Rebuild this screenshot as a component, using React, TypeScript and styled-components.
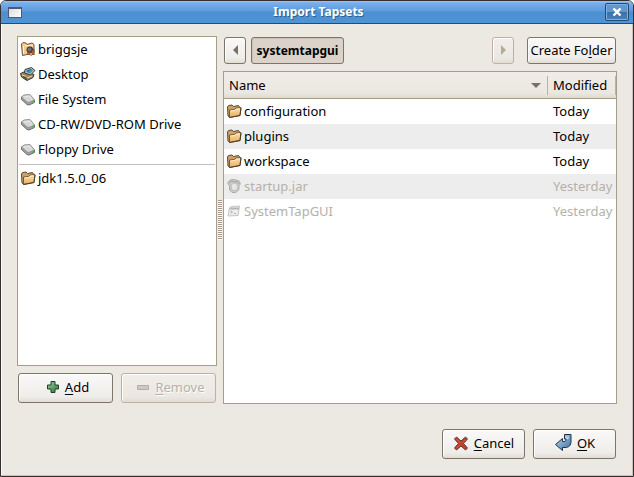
import React from "react";
import styled, { createGlobalStyle, css } from "styled-components";

const Global = createGlobalStyle`
  *, *::before, *::after { box-sizing: border-box; }
  body { margin: 0; background: #fff; }
  body, button, table { font: 13px/18px "Noto Sans", "Open Sans", sans-serif; color: #000; }
  button { margin: 0; }
`;

const Dialog = styled.div`
  min-height: 100vh;
  display: flex;
  flex-direction: column;
  border: 1px solid #35302f;
  border-radius: 6px 6px 0 0;
  background: #ece9e3;
  box-shadow: inset -1px -1px 0 #c9c1b6, inset 1px 0 0 #faf9f7;
  overflow: hidden;
`;

const TitleBar = styled.header`
  height: 23px;
  flex: none;
  display: grid;
  grid-template-columns: 24px 1fr 24px;
  align-items: center;
  padding: 0 4px 0 7px;
  background: linear-gradient(#9cc6f4 0, #78aeea 2px, #5f9bdb 10px, #4b90d1 11px, #4e94d6 100%);
  border-bottom: 1px solid #2c4a68;
`;

const Title = styled.h1`
  margin: 0;
  font-size: 12px;
  line-height: 20px;
  font-weight: 700;
  text-align: center;
  color: #fff;
  text-shadow: 1px 1px 0 #2f5f92;
`;

const WindowGlyph = styled.span`
  width: 14px;
  height: 11px;
  border: 1px solid #4b5c70;
  border-top-width: 2px;
  background: linear-gradient(135deg, #dcdcdc, #fff);
`;

const CloseButton = styled.button`
  width: 24px;
  height: 18px;
  padding: 0;
  display: grid;
  place-items: center;
  border: 1px solid #234a73;
  border-radius: 2px;
  background: linear-gradient(#6297cc 0 50%, #3a71a9 50%, #4780b8);
  box-shadow: inset 0 0 0 1px #80b0e0;
`;

const Body = styled.main`
  flex: 1;
  display: flex;
  padding: 12px 16px 0;
`;

const Sidebar = styled.aside`
  width: 200px;
  flex: none;
  display: flex;
  flex-direction: column;
`;

const frame = css`
  flex: 1;
  border: 1px solid #a89d8b;
  background: #fff;
`;

const Places = styled.ul`
  ${frame}
  margin: 0;
  padding: 0;
  list-style: none;
`;

const Place = styled.li`
  height: 25px;
  display: flex;
  align-items: center;
  gap: 2px;
  padding: 0 0 2px 2px;
  white-space: nowrap;
`;

const Separator = styled.li`
  height: 1px;
  margin: 2px 1px 1px;
  background: #c4c2be;
`;

const SidebarActions = styled.div`
  display: grid;
  grid-template-columns: 1fr 1fr;
  gap: 8px;
  padding: 7px 1px 1px;
`;

const Button = styled.button<{ $width?: number; $compact?: boolean }>`
  height: ${(p) => (p.$compact ? 27 : 30)}px;
  width: ${(p) => (p.$width ? p.$width + "px" : "auto")};
  padding: 0 0 2px;
  display: flex;
  align-items: center;
  justify-content: center;
  gap: 5px;
  border: 1px solid #7d7568;
  border-radius: 3px;
  background: linear-gradient(#faf9f8, #efedea 80%, #e2dcd4);
  box-shadow: inset 1px 1px 0 #fff;
  white-space: nowrap;
  &:disabled {
    color: #b5b1a9;
    border-color: #bdb1a4;
    background: linear-gradient(#f1eeea, #ebe7e2 80%, #e2dcd4);
    text-shadow: 1px 1px 0 #fff;
  }
`;

const SidebarButton = styled(Button)`
  padding-left: 4px;
`;

const PathButton = styled(Button)`
  padding: 0;
  font-size: 12px;
  font-weight: 700;
  background: #dbd2c9;
  box-shadow: inset 1px 1px 0 #cbc1b6;
`;

const Mnemonic = styled.span`
  text-decoration: underline;
  text-decoration-thickness: 1px;
  text-underline-offset: 2px;
`;

const Splitter = styled.div`
  width: 6px;
  flex: none;
  display: flex;
  align-items: center;
  justify-content: center;
`;

const Grip = styled.span`
  width: 4px;
  height: 40px;
  background: repeating-linear-gradient(#a1968a 0 1px, #fff 1px 2px);
`;

const Browser = styled.section`
  flex: 1;
  min-width: 0;
  display: flex;
  flex-direction: column;
`;

const PathBar = styled.nav`
  display: flex;
  gap: 5px;
  padding: 1px 1px 7px;
`;

const Spacer = styled.span`
  flex: 1;
`;

const FolderAction = styled.div`
  margin-left: 8px;
`;

const FileFrame = styled.div`
  ${frame}
`;

const FileTable = styled.table`
  width: 100%;
  table-layout: fixed;
  border-collapse: separate;
  border-spacing: 0;
`;

const HeadCell = styled.th<{ $width?: number }>`
  width: ${(p) => (p.$width ? p.$width + "px" : "auto")};
  height: 27px;
  padding: 0;
  background: linear-gradient(#f0ede8, #ebe8e2 80%, #dfd9d0);
  border-bottom: 1px solid #a89d8b;
`;

const SortButton = styled.button`
  width: 100%;
  height: 19px;
  display: flex;
  align-items: center;
  justify-content: space-between;
  padding: 0 6px 0 5px;
  border: 0;
  border-right: 1px solid #bab2a7;
  background: none;
`;

const FileRow = styled.tr<{ $disabled?: boolean }>`
  color: ${(p) => (p.$disabled ? "#b5b1a9" : "#000")};
  &:nth-child(even) { background: #ededed; }
`;

const Cell = styled.td`
  height: 25px;
  padding: 0 0 2px 5px;
  white-space: nowrap;
`;

const NameCell = styled(Cell)`
  padding-left: 2px;
`;

const FileName = styled.span`
  display: flex;
  align-items: center;
  gap: 2px;
`;

const Footer = styled.footer`
  display: flex;
  justify-content: flex-end;
  gap: 8px;
  padding: 25px 17px 17px;
`;

const Icon = styled.svg`
  flex: none;
  display: block;
`;

const FolderIcon = () => (
  <Icon width="16" height="16" viewBox="0 0 16 16" aria-hidden="true">
    <defs>
      <linearGradient id="folder" x2="0" y2="1">
        <stop stopColor="#ffdfa8" />
        <stop offset="1" stopColor="#e5ae66" />
      </linearGradient>
    </defs>
    <path d="M1.500 4 2.500 2.500 6 2 7.500 3.500 12.500 2.500 13.500 4V6L4 14.500 2 13z" fill="#cfa064" stroke="#54483a" />
    <path d="M3.500 14.500V7L8.500 6.500 10 5 15 4.500 14 12.500z" fill="url(#folder)" stroke="#755a38" />
    <path d="M15 5 14 12.500 3.500 14.500" fill="none" stroke="#4e3d28" />
    <path d="M4.500 8 9 7.500 10.500 6H14" fill="none" stroke="#ffedc9" />
  </Icon>
);

const HomeIcon = () => (
  <Icon width="16" height="16" viewBox="0 0 16 16" aria-hidden="true">
    <path d="M1.500 3 3 1.500 6 2 7 3.500 12 2 14 3.500V12L2.500 14.500z" fill="#efcb92" stroke="#6a5335" />
    <path d="M3.500 5v8M5 4.500h8" fill="none" stroke="#fff0cf" />
    <path d="m6.500 9 1.500-3 3.500-.500 3 3.500v5H8z" fill="#544a43" />
    <circle cx="9.500" cy="8.500" r="2.500" fill="#77716d" stroke="#423a35" />
    <path d="M7 12.500h3M13 9.500v4" stroke="#c4581f" strokeWidth="2" />
    <path d="M10 12h2v3h-2z" fill="#c9a27b" />
  </Icon>
);

const DesktopIcon = () => (
  <Icon width="16" height="16" viewBox="0 0 16 16" aria-hidden="true">
    <path d="M.500 7.500 5 5.500l9 3-1 3-6 3L1.500 11z" fill="#a18b59" stroke="#37342f" />
    <path d="M5 3.500 11.500 1.500 15 4.500 10.500 9 4.500 7z" fill="#b9c3c8" stroke="#30363c" />
    <path d="M6.500 4.200 11 2.800 13 4.600 10 7.200 6.500 6z" fill="#3275b5" />
    <path d="m9 5 3-1 .8.700L10 7z" fill="#60a850" />
    <path d="m2 9 4 1.500M7 12l5-2" stroke="#e4d5a8" />
    <path d="m3 10.500 3 1.500v2" fill="none" stroke="#3a342b" />
  </Icon>
);

const DriveIcon = () => (
  <Icon width="16" height="16" viewBox="0 0 16 16" aria-hidden="true">
    <path d="M1.500 6v2.500l5.500 5 2 .500 5.500-2.500V9z" fill="#a0a0a0" stroke="#6f6f6f" />
    <path d="M1.500 6 4 4l6-.500 4.500 5.500L9 11.500 7 11z" fill="#d6d6d6" stroke="#929292" />
    <path d="M4 6 9 5l3 3.500" fill="none" stroke="#eaeaea" />
    <path d="M12 11h2" stroke="#4fb84f" strokeWidth="1.500" />
  </Icon>
);

const JarIcon = () => (
  <Icon width="16" height="16" viewBox="0 0 16 16" aria-hidden="true">
    <path d="M1.500 5 4 2l3-.500L10 2l3 1 1.500 3-1.500 1.500v4L10 14.500H6L3.500 12V8z" fill="#cbcbc9" stroke="#afafad" />
    <path d="M5 7 7.500 5l3 .500 1.500 3-1.500 4h-4L5 9z" fill="#e6e6e4" stroke="#bcbcba" />
    <path d="M3 5 6 3l2 1 3-.500L13 6" fill="none" stroke="#a3a3a1" />
  </Icon>
);

const ProgramIcon = () => (
  <Icon width="16" height="16" viewBox="0 0 16 16" aria-hidden="true">
    <path d="M3.500 5 5 3.500 13.500 3 12 12.500 2 13z" fill="#eeeeec" stroke="#c4c4c2" />
    <path d="M4 5.500h9" stroke="#b5b5b3" strokeWidth="2" />
    <path d="m4.500 8 2 1-2 1.500M8 10.500h2" fill="none" stroke="#b0b0ae" />
  </Icon>
);

const AddIcon = () => (
  <Icon width="14" height="14" viewBox="0 0 14 14" aria-hidden="true">
    <defs>
      <linearGradient id="green" x2="1" y2="1">
        <stop stopColor="#9bd39c" />
        <stop offset="1" stopColor="#28753b" />
      </linearGradient>
    </defs>
    <path d="M5 1.500h4V5h3.500v4H9v3.500H5V9H1.500V5H5z" fill="url(#green)" stroke="#1e4026" />
  </Icon>
);

const RemoveIcon = () => (
  <Icon width="14" height="14" viewBox="0 0 14 14" aria-hidden="true">
    <path d="M1.500 5.500h11v4h-11z" fill="#d0c8c6" stroke="#b6acaa" />
  </Icon>
);

const CancelIcon = () => (
  <Icon width="16" height="16" viewBox="0 0 16 16" aria-hidden="true">
    <path d="M3.500 2 8 6 12.500 2 14.500 4 10.500 8.500 14.500 13 12.500 15 8 11 3.500 15 1.500 13 5.500 8.500 1.500 4z" fill="#c73d27" stroke="#553f3a" />
    <path d="m3.500 4 4 4m2 0 3-3M4 13l3-3" stroke="#d9604a" />
  </Icon>
);

const OkIcon = () => (
  <Icon width="18" height="18" viewBox="0 0 18 18" aria-hidden="true">
    <defs>
      <linearGradient id="blue" x2="1" y2="1">
        <stop stopColor="#c0dcf0" />
        <stop offset="1" stopColor="#386b9e" />
      </linearGradient>
    </defs>
    <path d="M10.500.500h6.500v6.500c0 4.500-2 6.500-6 6.500H8.500v3L1.500 10.500 8.500 4.500v3h1.500c1.500 0 2-.500 2-2.500h-1.500z" fill="url(#blue)" stroke="#20344a" />
    <path d="M12 2v2l2 1v-3" fill="none" stroke="#d5e6f3" />
  </Icon>
);

const places: [string, React.FC][] = [
  ["briggsje", HomeIcon],
  ["Desktop", DesktopIcon],
  ["File System", DriveIcon],
  ["CD-RW/DVD-ROM Drive", DriveIcon],
  ["Floppy Drive", DriveIcon],
];

const files: { name: string; modified: string; icon: React.FC; disabled?: boolean }[] = [
  { name: "configuration", modified: "Today", icon: FolderIcon },
  { name: "plugins", modified: "Today", icon: FolderIcon },
  { name: "workspace", modified: "Today", icon: FolderIcon },
  { name: "startup.jar", modified: "Yesterday", icon: JarIcon, disabled: true },
  { name: "SystemTapGUI", modified: "Yesterday", icon: ProgramIcon, disabled: true },
];

export default function App() {
  return (
    <>
      <Global />
      <Dialog role="dialog" aria-labelledby="dialog-title">
        <TitleBar>
          <WindowGlyph />
          <Title id="dialog-title">Import Tapsets</Title>
          <CloseButton aria-label="Close">
            <Icon width="10" height="8" viewBox="0 0 10 8" aria-hidden="true">
              <path d="m1.500.500 7 7m0-7-7 7" stroke="#fff" strokeWidth="2.400" />
            </Icon>
          </CloseButton>
        </TitleBar>
        <Body>
          <Sidebar>
            <Places>
              {places.map(([name, Glyph]) => (
                <Place key={name}><Glyph />{name}</Place>
              ))}
              <Separator role="separator" />
              <Place><FolderIcon />jdk1.5.0_06</Place>
            </Places>
            <SidebarActions>
              <SidebarButton><AddIcon /><span><Mnemonic>A</Mnemonic>dd</span></SidebarButton>
              <SidebarButton disabled><RemoveIcon /><span><Mnemonic>R</Mnemonic>emove</span></SidebarButton>
            </SidebarActions>
          </Sidebar>
          <Splitter role="separator" aria-orientation="vertical"><Grip /></Splitter>
          <Browser>
            <PathBar aria-label="Path">
              <Button $compact $width={22} aria-label="Back">
                <Icon width="5" height="10" viewBox="0 0 5 10" aria-hidden="true"><path d="M5 0v10L0 5z" fill="#797165" /></Icon>
              </Button>
              <PathButton $compact $width={93}>systemtapgui</PathButton>
              <Spacer />
              <Button $compact $width={22} disabled aria-label="Forward">
                <Icon width="5" height="10" viewBox="0 0 5 10" aria-hidden="true"><path d="M0 0v10l5-5z" fill="#b5aa98" /></Icon>
              </Button>
              <FolderAction>
                <Button $compact $width={89}><span>Create Fo<Mnemonic>l</Mnemonic>der</span></Button>
              </FolderAction>
            </PathBar>
            <FileFrame>
              <FileTable>
                <thead>
                  <tr>
                    <HeadCell aria-sort="ascending">
                      <SortButton>
                        Name
                        <Icon width="10" height="5" viewBox="0 0 10 5" aria-hidden="true"><path d="M0 0h10L5 5z" fill="#797165" /></Icon>
                      </SortButton>
                    </HeadCell>
                    <HeadCell $width={68}><SortButton>Modified</SortButton></HeadCell>
                  </tr>
                </thead>
                <tbody>
                  {files.map(({ name, modified, icon: Glyph, disabled }) => (
                    <FileRow key={name} $disabled={disabled}>
                      <NameCell><FileName><Glyph />{name}</FileName></NameCell>
                      <Cell>{modified}</Cell>
                    </FileRow>
                  ))}
                </tbody>
              </FileTable>
            </FileFrame>
          </Browser>
        </Body>
        <Footer>
          <Button $width={83}><CancelIcon /><span><Mnemonic>C</Mnemonic>ancel</span></Button>
          <Button $width={83}><OkIcon /><span><Mnemonic>O</Mnemonic>K</span></Button>
        </Footer>
      </Dialog>
    </>
  );
}
